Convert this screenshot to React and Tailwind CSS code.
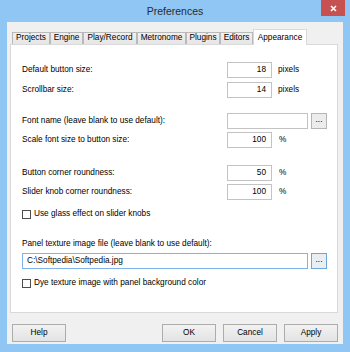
const tabs = [
  { label: "Projects", w: "w-[38px]" },
  { label: "Engine", w: "w-[33px]" },
  { label: "Play/Record", w: "w-[54px]" },
  { label: "Metronome", w: "w-[49px]" },
  { label: "Plugins", w: "w-[34px]" },
  { label: "Editors", w: "w-[33px]" },
];

const NumberField = ({ value, unit, unitGap }) => (
  <div className="flex items-center">
    <div className="w-[45px] h-[16px] border border-[#c3c3c3] bg-white flex items-center justify-end pr-[5px]">
      {value}
    </div>
    <span className={unitGap}>{unit}</span>
  </div>
);

const Row = ({ label, children, className }) => (
  <div className={`flex items-center h-[16px] ${className}`}>
    <div className="w-[205px]">{label}</div>
    {children}
  </div>
);

const Check = ({ label, className }) => (
  <div className={`flex items-center h-[16px] ${className}`}>
    <div className="w-[9px] h-[9px] border border-[#4d4d4d] bg-white" />
    <span className="ml-[3px]">{label}</span>
  </div>
);

const DotsButton = ({ focused }) => (
  <div
    className={`ml-[3px] w-[16px] h-[16px] border flex items-center justify-center leading-none pb-[2px] ${
      focused ? "border-[#6ea6dc] bg-[#e9eef3]" : "border-[#b5b5b5] bg-[#ececec]"
    }`}
  >
    ...
  </div>
);

const Button = ({ label }) => (
  <div className="w-[54px] h-[18px] border border-[#acacac] bg-gradient-to-b from-[#f2f2f2] to-[#e3e3e3] flex items-center justify-center">
    {label}
  </div>
);

export default function App() {
  return (
    <div
      className="w-[350px] h-[352px] bg-[#8fc6f3] flex flex-col text-black"
      style={{ fontFamily: '"Liberation Sans", Arial, sans-serif' }}
    >
      <div className="relative h-[22px] flex items-center justify-center">
        <span className="text-[10.5px] text-[#2b2b2b] pt-[1px]">Preferences</span>
        <div className="absolute right-[5px] top-0 w-[24px] h-[16px] bg-[#c75050] flex items-center justify-center">
          <svg width="7" height="7" viewBox="0 0 7 7">
            <path d="M1 1L6 6M6 1L1 6" stroke="white" strokeWidth="1.6" />
          </svg>
        </div>
      </div>

      <div className="mx-[7px] h-[322px] bg-[#f0f0f0] flex flex-col text-[8.25px] leading-none">
        <div className="flex items-end h-[22px] pl-[5px]">
          {tabs.map((t) => (
            <div
              key={t.label}
              className={`${t.w} h-[12px] border-l border-t border-r border-[#b9b9b9] bg-gradient-to-b from-[#f0f0f0] to-[#e6e6e6] flex items-center justify-center`}
            >
              {t.label}
            </div>
          ))}
          <div className="relative z-10 w-[54px] h-[16px] -mb-px border-l border-t border-r border-[#d9d9d9] bg-white flex items-start justify-center pt-[4px]">
            Appearance
          </div>
        </div>

        <div className="ml-[3px] mr-[5px] h-[269px] border border-[#d9d9d9] bg-white flex flex-col pl-[11px] pt-[17px]">
          <Row label="Default button size:">
            <NumberField value="18" unit="pixels" unitGap="ml-[6px]" />
          </Row>
          <Row label="Scrollbar size:" className="mt-[4px]">
            <NumberField value="14" unit="pixels" unitGap="ml-[6px]" />
          </Row>
          <Row label="Font name (leave blank to use default):" className="mt-[15px]">
            <div className="w-[81px] h-[16px] border border-[#c3c3c3] bg-white" />
            <DotsButton />
          </Row>
          <Row label="Scale font size to button size:" className="mt-[3px]">
            <NumberField value="100" unit="%" unitGap="ml-[7px]" />
          </Row>
          <Row label="Button corner roundness:" className="mt-[17px]">
            <NumberField value="50" unit="%" unitGap="ml-[7px]" />
          </Row>
          <Row label="Slider knob corner roundness:" className="mt-[3px]">
            <NumberField value="100" unit="%" unitGap="ml-[7px]" />
          </Row>
          <Check label="Use glass effect on slider knobs" className="mt-[6px]" />
          <div className="mt-[16px] h-[12px] flex items-center">
            Panel texture image file (leave blank to use default):
          </div>
          <div className="mt-[3px] flex items-center h-[16px]">
            <div className="w-[286px] h-[16px] border border-[#7eb4ea] bg-white flex items-center pl-[4px]">
              C:\Softpedia\Softpedia.jpg
            </div>
            <DotsButton focused />
          </div>
          <Check label="Dye texture image with panel background color" className="mt-[6px]" />
        </div>

        <div className="flex items-center mt-[11px] pl-[5px] pr-[5px]">
          <Button label="Help" />
          <div className="flex-1" />
          <div className="flex gap-[7px]">
            <Button label="OK" />
            <Button label="Cancel" />
            <Button label="Apply" />
          </div>
        </div>
      </div>
    </div>
  );
}
